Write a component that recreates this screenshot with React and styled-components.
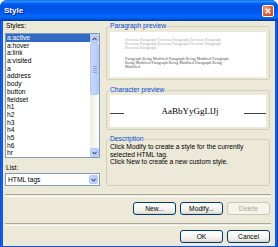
import React from 'react';
import styled, { createGlobalStyle } from 'styled-components';

const GlobalStyle = createGlobalStyle`
  html, body {
    margin: 0;
    padding: 0;
    background: #ffffff;
  }
  body {
    font-family: 'Liberation Sans', Arial, sans-serif;
  }
`;

const Window = styled.div`
  width: 278px;
  height: 247px;
  display: flex;
  flex-direction: column;
  border-radius: 7px 7px 0 0;
  background: linear-gradient(to right, #0831d9 0px, #166aee 1px, #0855dd 3px, #0855dd 275px, #166aee 276px, #0831d9 278px);
  overflow: hidden;
`;

const TitleBar = styled.div`
  height: 21px;
  flex: none;
  display: flex;
  align-items: center;
  justify-content: space-between;
  padding: 0 4px 0 4px;
  box-sizing: border-box;
  background: linear-gradient(180deg, #0058ee 0%, #3593ff 5%, #288eff 8%, #127dff 11%, #036ffc 14%, #0262ee 18%, #0057e5 24%, #0054e3 30%, #0055eb 56%, #005bf5 66%, #026afe 76%, #0062ef 86%, #0052d6 92%, #0040ab 96%, #003092 100%);
`;

const Title = styled.span`
  color: #ffffff;
  font-weight: bold;
  font-size: 8px;
  text-shadow: 1px 1px #0a1883;
`;

const CloseButton = styled.div`
  width: 12px;
  height: 12px;
  box-sizing: border-box;
  border: 1px solid #ffffff;
  border-radius: 2px;
  background: radial-gradient(circle at 30% 30%, #f1a58a 0%, #e4673f 45%, #c7431c 100%);
  display: flex;
  align-items: center;
  justify-content: center;
`;

const Body = styled.div`
  flex: 1;
  margin: 0 3px 3px 3px;
  background: #ece9d8;
  padding: 1px 5px 3px 2px;
  display: flex;
  flex-direction: column;
  font-size: 6.7px;
  color: #000000;
`;

const Main = styled.div`
  display: flex;
  gap: 6px;
`;

const LeftCol = styled.div`
  width: 95px;
  display: flex;
  flex-direction: column;
`;

const FieldLabel = styled.div`
  line-height: 8px;
  padding-left: 1px;
  margin-top: ${p => p.$top || 0}px;
  margin-bottom: ${p => p.$bottom || 0}px;
`;

const ListBox = styled.div`
  height: 125px;
  box-sizing: border-box;
  border: 1px solid #7f9db9;
  background: #ffffff;
  display: flex;
  overflow: hidden;
`;

const Items = styled.div`
  flex: 1;
  overflow: hidden;
`;

const Item = styled.div`
  line-height: 7.7px;
  height: 7.7px;
  padding-left: 1px;
  white-space: nowrap;
  background: ${p => (p.$selected ? '#316ac5' : 'transparent')};
  color: ${p => (p.$selected ? '#ffffff' : '#000000')};
`;

const ScrollBar = styled.div`
  width: 9px;
  display: flex;
  flex-direction: column;
  background: linear-gradient(to right, #eeede5, #fdfdfa);
`;

const ScrollPiece = styled.div`
  height: ${p => p.$h}px;
  flex: none;
  box-sizing: border-box;
  border: 1px solid #b4c8f6;
  border-radius: 2px;
  background: linear-gradient(to right, #c5d5fc, #bfd1f9 60%, #b2c7f5);
  display: flex;
  flex-direction: column;
  align-items: center;
  justify-content: center;
  gap: 1px;
`;

const Track = styled.div`
  flex: 1;
`;

const Grip = styled.div`
  width: 4px;
  height: 1px;
  background: #8aa6e6;
`;

const Combo = styled.div`
  height: 13px;
  box-sizing: border-box;
  border: 1px solid #7f9db9;
  background: #ffffff;
  display: flex;
  align-items: center;
  justify-content: space-between;
  padding: 1px 1px 1px 2px;
`;

const ComboButton = styled(ScrollPiece)`
  width: 9px;
  height: 9px;
`;

const RightCol = styled.div`
  width: 164px;
  display: flex;
  flex-direction: column;
`;

const Group = styled.fieldset`
  margin: ${p => p.$top || 0}px 0 0 0;
  padding: ${p => p.$pad};
  border: 1px solid #d0d0bf;
  border-radius: 3px;
  min-width: 0;
  flex: ${p => (p.$grow ? 1 : 'none')};
`;

const Legend = styled.legend`
  padding: 0 1px;
  margin-left: -1px;
  color: #0046d5;
  line-height: 8px;
`;

const Preview = styled.div`
  background: #ffffff;
  height: ${p => p.$h}px;
  box-sizing: border-box;
`;

const ParaPreview = styled(Preview)`
  padding: 6px 0 0 15px;
  font-family: 'Liberation Serif', 'Times New Roman', serif;
  font-size: 4px;
  line-height: 4.1px;
`;

const ParaBlock = styled.div`
  color: ${p => p.$color};
  margin-bottom: 7px;
`;

const PLine = styled.div`
  white-space: nowrap;
  height: 4.1px;
`;

const CharPreview = styled(Preview)`
  display: flex;
  align-items: center;
`;

const Rule = styled.div`
  width: ${p => p.$w}px;
  height: 1px;
  margin-top: 4px;
  background: #404040;
`;

const Sample = styled.div`
  flex: 1;
  text-align: center;
  padding-left: 12px;
  font-family: 'Liberation Serif', 'Times New Roman', serif;
  font-size: 9px;
`;

const DescText = styled.div`
  line-height: 7.5px;
  white-space: nowrap;
`;

const Separator = styled.div`
  height: 1px;
  border-top: 1px solid #aca899;
  border-bottom: 1px solid #ffffff;
  margin: ${p => p.$top}px -1px 0 0;
`;

const ButtonRow = styled.div`
  display: flex;
  justify-content: flex-end;
  gap: 4px;
  margin-top: ${p => p.$top}px;
`;

const Button = styled.div`
  width: 43px;
  height: 13px;
  box-sizing: border-box;
  border: 1px solid ${p => (p.$disabled ? '#c9c7ba' : '#003c74')};
  border-radius: 3px;
  background: ${p => (p.$disabled ? '#f5f4ea' : 'linear-gradient(180deg, #ffffff 0%, #f7f7f4 40%, #ecebe6 80%, #d6d0c5 100%)')};
  color: ${p => (p.$disabled ? '#aca899' : '#000000')};
  display: flex;
  align-items: center;
  justify-content: center;
`;

const Chevron = ({ up }) => (
  <svg width="5" height="4" viewBox="0 0 5 4">
    <path d={up ? 'M0.5 3 L2.5 1 L4.5 3' : 'M0.5 1 L2.5 3 L4.5 1'} fill="none" stroke="#4d6185" strokeWidth="1.2" />
  </svg>
);

const styles = ['a:active', 'a:hover', 'a:link', 'a:visited', 'a', 'address', 'body', 'button', 'fieldset', 'h1', 'h2', 'h3', 'h4', 'h5', 'h6', 'hr'];

const App = () => (
  <>
    <GlobalStyle />
    <Window>
      <TitleBar>
        <Title>Style</Title>
        <CloseButton>
          <svg width="6" height="6" viewBox="0 0 6 6">
            <path d="M0.8 0.8 L5.2 5.2 M5.2 0.8 L0.8 5.2" stroke="#ffffff" strokeWidth="1.4" />
          </svg>
        </CloseButton>
      </TitleBar>
      <Body>
        <Main>
          <LeftCol>
            <FieldLabel $bottom={3}>Styles:</FieldLabel>
            <ListBox>
              <Items>
                {styles.map((s, i) => (
                  <Item key={s} $selected={i === 0}>{s}</Item>
                ))}
              </Items>
              <ScrollBar>
                <ScrollPiece $h={9}><Chevron up /></ScrollPiece>
                <ScrollPiece $h={52}><Grip /><Grip /><Grip /><Grip /></ScrollPiece>
                <Track />
                <ScrollPiece $h={9}><Chevron /></ScrollPiece>
              </ScrollBar>
            </ListBox>
            <FieldLabel $top={6} $bottom={1}>List:</FieldLabel>
            <Combo>
              <span>HTML tags</span>
              <ComboButton $h={9}><Chevron /></ComboButton>
            </Combo>
          </LeftCol>
          <RightCol>
            <Group $pad="2px 3px 2px 3px">
              <Legend>Paragraph preview</Legend>
              <ParaPreview $h={45}>
                <ParaBlock $color="#a8a8a8">
                  <PLine>Previous Paragraph Previous Paragraph Previous Paragraph</PLine>
                  <PLine>Previous Paragraph Previous Paragraph Previous Paragraph</PLine>
                  <PLine>Previous Paragraph</PLine>
                </ParaBlock>
                <ParaBlock $color="#505050">
                  <PLine>Paragraph Being Modified Paragraph Being Modified Paragraph</PLine>
                  <PLine>Being Modified Paragraph Being Modified Paragraph Being</PLine>
                  <PLine>Modified</PLine>
                </ParaBlock>
              </ParaPreview>
            </Group>
            <Group $top={6} $pad="1px 3px 2px 3px">
              <Legend>Character preview</Legend>
              <CharPreview $h={32}>
                <Rule $w={14} />
                <Sample>AaBbYyGgLlJj</Sample>
                <Rule $w={22} />
              </CharPreview>
            </Group>
            <Group $top={5} $pad="0 3px 2px 3px" $grow>
              <Legend>Description</Legend>
              <DescText>Click Modify to create a style for the currently</DescText>
              <DescText>selected HTML tag.</DescText>
              <DescText>Click New to create a new custom style.</DescText>
            </Group>
          </RightCol>
        </Main>
        <Separator $top={8} />
        <ButtonRow $top={5}>
          <Button>New...</Button>
          <Button>Modify...</Button>
          <Button $disabled>Delete</Button>
        </ButtonRow>
        <Separator $top={8} />
        <ButtonRow $top={4}>
          <Button>OK</Button>
          <Button>Cancel</Button>
        </ButtonRow>
      </Body>
    </Window>
  </>
);

export default App;
